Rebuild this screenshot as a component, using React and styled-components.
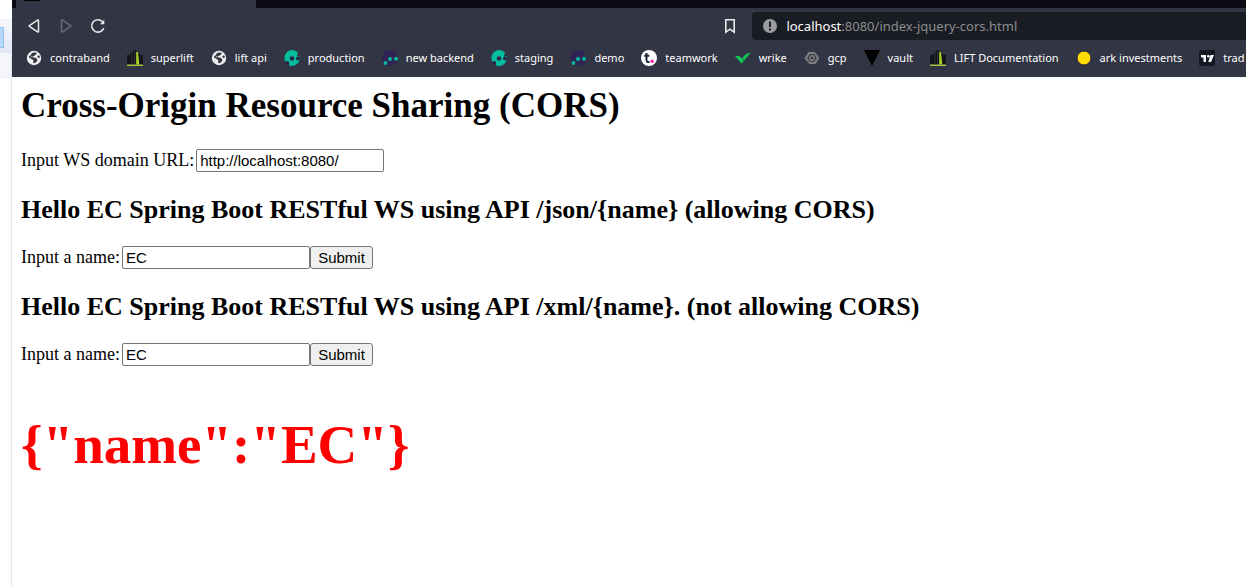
import React, { useState } from "react";
import styled, { createGlobalStyle } from "styled-components";

const GlobalStyle = createGlobalStyle`
  *, *::before, *::after { box-sizing: border-box; }
  body { margin: 0; background: #fff; overflow: hidden; }
`;

const Desktop = styled.div`
  display: grid;
  grid-template-columns: 12px minmax(0, 1fr);
  min-height: 100vh;
`;

const Behind = styled.aside`
  display: flex;
  flex-direction: column;
`;

const BehindTop = styled.div`
  height: 19px;
  background: #fff;
`;

const BehindToolbar = styled.div`
  height: 34px;
  padding-top: 7px;
  border-top: 1px solid #f0f0f0;
  background: linear-gradient(#f8f9fd, #e0e4f3);
`;

const BehindTile = styled.div`
  width: 4px;
  height: 21px;
  border: 1px solid #90c0f0;
  border-left: 0;
  background: #b8d8f8;
`;

const BehindTab = styled.div`
  height: 26px;
  border-right: 1px solid #e0e3ef;
  border-top-right-radius: 4px;
  background: #f5f6fb;
`;

const BehindPage = styled.div`
  flex: 1;
  border-right: 1px solid #e2e4ee;
`;

const Window = styled.div`
  display: flex;
  flex-direction: column;
  min-width: 0;
`;

const Chrome = styled.header`
  height: 77px;
  background: #323544;
  font-family: "Noto Sans", "Open Sans", sans-serif;
  overflow: hidden;
`;

const TabStrip = styled.div`
  height: 8px;
  padding-left: 4px;
  background: #0a0b14;
`;

const ActiveTab = styled.div`
  width: 240px;
  height: 8px;
  padding-left: 8px;
  background: #323544;
`;

const TabIcon = styled.div`
  width: 16px;
  height: 1px;
  background: #000;
`;

const Toolbar = styled.div`
  display: grid;
  grid-template-columns: 3fr 2fr;
  padding-top: 4px;
`;

const ToolbarActions = styled.div`
  display: flex;
  align-items: center;
  gap: 16px;
  padding: 0 14px;
`;

const IconButton = styled.button`
  display: flex;
  width: 16px;
  height: 16px;
  padding: 0;
  border: 0;
  background: none;
  color: ${(p) => (p.$dim ? "#696b76" : "#e8e8ea")};
  margin-left: ${(p) => (p.$end ? "auto" : "0")};
`;

const AddressBar = styled.div`
  display: flex;
  align-items: center;
  gap: 8px;
  height: 28px;
  padding-left: 10px;
  border-radius: 4px 0 0 4px;
  background: #191c22;
`;

const Address = styled.div`
  color: #8b8c90;
  font-size: 13px;
  line-height: 20px;
  white-space: nowrap;
  outline: none;
`;

const Host = styled.span`
  color: #fff;
`;

const Bookmarks = styled.nav`
  display: flex;
  gap: 17px;
  padding: 10px 0 0 14px;
`;

const Bookmark = styled.a`
  display: flex;
  flex: none;
  align-items: center;
  gap: 8px;
  color: #fff;
  font-size: 11px;
  line-height: 16px;
  text-decoration: none;
  white-space: nowrap;
`;

const Page = styled.main`
  padding: 9px;
  color: #000;
  font-family: "Liberation Serif", "Times New Roman", serif;
`;

const Title = styled.h1`
  margin: 0 0 23px;
  font-size: 35px;
  line-height: 40px;
`;

const Heading = styled.h2`
  margin: 24px 0 21px;
  font-size: 26px;
  line-height: 30px;
`;

const Row = styled.form`
  display: flex;
  align-items: center;
  height: 22px;
  font-size: 18px;
  line-height: 20px;
`;

const Label = styled.label`
  margin-right: 2px;
`;

const TextBox = styled.input`
  width: 188px;
  height: 23px;
  padding: 1px 3px;
  border: 1px solid #767676;
  border-radius: 2px;
  background: #fff;
  color: #000;
  font-family: "Liberation Sans", Arial, sans-serif;
  font-size: 15px;
  outline: none;
`;

const SubmitButton = styled.button`
  width: 63px;
  height: 23px;
  padding: 0;
  border: 1px solid #767676;
  border-radius: 3px;
  background: #efefef;
  color: #000;
  font-family: "Liberation Sans", Arial, sans-serif;
  font-size: 15px;
`;

const Result = styled.output`
  display: block;
  margin-top: 48px;
  color: #f00;
  font-size: 55px;
  font-weight: bold;
  line-height: 64px;
`;

const Icon = ({ children }) => (
  <svg width="16" height="16" viewBox="0 0 16 16" fill="none" aria-hidden="true">
    {children}
  </svg>
);

const GlobeIcon = () => (
  <Icon>
    <circle cx="8" cy="8" r="7.2" fill="#eeeeef" />
    <path
      d="M7.500 2.500 11 2.700 9.500 5 7 6.300l.5 1.200 2.700.5L11.500 10l-1.300 2.300L8 13.300l-1-1 .5-2L5.500 9 3 7.500l.3-1.800L5 5.200l.5-1.700z"
      fill="#323544"
    />
    <path d="M4.500 6.300 7 6.800l-1 1z" fill="#eeeeef" />
    <path d="m11.300 6 2-.7.7 2.200-2 .5z" fill="#323544" />
  </Icon>
);

const LiftIcon = () => (
  <Icon>
    <path d="M0 5h3V3h2V1.500L8 0l3 1.500V4h2v1h3v9H0z" fill="#15161b" />
    <path d="M5 2v12M7.500 1v13" stroke="#303338" />
    <path d="M9.200 1.500 11 2.500l1.300 12H9.200z" fill="#a6d32c" />
    <path d="M0 14.600h16v1.400H0z" fill="#a6c93c" />
  </Icon>
);

const HubIcon = () => (
  <Icon>
    <path
      d="M8 0c3 0 5 1.400 6.200 3.200-1.700.8-1.600 3 .4 3.300l1.200.1C16.500 12 12.500 16 8 16c-1.300 0-2.500-.3-3.300-.8.600-2.500-1.200-3.600-3-2.400C-1.500 7 2 0 8 0z"
      fill="#04bd9d"
    />
    <circle cx="8" cy="8.500" r="2.200" fill="#30214d" />
    <circle cx="14" cy="8.500" r="2" fill="#30214d" />
    <circle cx="3.200" cy="13" r="2" fill="#30214d" />
  </Icon>
);

const NodesIcon = () => (
  <Icon>
    <circle cx="8" cy="8" r="8" fill="#302355" />
    <circle cx="3.500" cy="13" r="1.900" fill="#08b99b" />
    <circle cx="8" cy="9" r="2" fill="#08b99b" />
    <circle cx="14" cy="8.700" r="2" fill="#08b99b" />
  </Icon>
);

const TeamworkIcon = () => (
  <Icon>
    <circle cx="8" cy="8" r="8" fill="#fff" />
    <path d="M5.500 3v7c0 1.800 1 2.300 3 1.900M3.300 5.800h5" stroke="#20243a" strokeWidth="2" />
    <circle cx="11.200" cy="11.300" r="1.800" fill="#ff22b1" />
  </Icon>
);

const WrikeIcon = () => (
  <Icon>
    <path d="M0 6h4l3 2.500L11 4l5-1.500L6.500 13.500z" fill="#10c957" />
    <path d="m7 8.500 1.500 2" stroke="#323544" strokeWidth="0.6" />
  </Icon>
);

const GcpIcon = () => (
  <Icon>
    <path d="M5 3.100h6L14 8l-3 4.900H5L2 8z" stroke="#7e7e80" strokeWidth="2.200" />
    <circle cx="8" cy="8" r="2.200" stroke="#77787b" strokeWidth="1.800" />
    <path d="m11 2 2 3M5 14l-2-3" stroke="#323544" strokeWidth="0.8" />
  </Icon>
);

const VaultIcon = () => (
  <Icon>
    <path d="M0 0h16L8 16z" fill="#000" />
    <path d="M6.500 4v4M9.500 4v4" stroke="#24252c" strokeDasharray="1 1" />
  </Icon>
);

const ArkIcon = () => (
  <Icon>
    <circle cx="8" cy="8" r="7" fill="#ffdc00" stroke="#252047" />
  </Icon>
);

const TradingIcon = () => (
  <Icon>
    <rect width="16" height="16" rx="2" fill="#131722" />
    <path d="M2 5h5v7H4.500V7.500H2zM11.500 5H15l-3 7H9.300z" fill="#fff" />
    <circle cx="9.300" cy="6.300" r="1.300" fill="#fff" />
  </Icon>
);

const bookmarks = [
  ["contraband", GlobeIcon],
  ["superlift", LiftIcon],
  ["lift api", GlobeIcon],
  ["production", HubIcon],
  ["new backend", NodesIcon],
  ["staging", HubIcon],
  ["demo", NodesIcon],
  ["teamwork", TeamworkIcon],
  ["wrike", WrikeIcon],
  ["gcp", GcpIcon],
  ["vault", VaultIcon],
  ["LIFT Documentation", LiftIcon],
  ["ark investments", ArkIcon],
  ["trad", TradingIcon],
];

function BrowserChrome() {
  return (
    <Chrome>
      <TabStrip>
        <ActiveTab>
          <TabIcon />
        </ActiveTab>
      </TabStrip>
      <Toolbar>
        <ToolbarActions>
          <IconButton aria-label="Back">
            <Icon>
              <path d="M12.500 2.600v10.800q0 1-1 .4L3.400 8.500q-.7-.5 0-1l8.100-5.300q1-.6 1 .4z" stroke="currentColor" strokeWidth="1.500" />
            </Icon>
          </IconButton>
          <IconButton aria-label="Forward" $dim>
            <Icon>
              <path d="M3.500 2.600v10.800q0 1 1 .4l8.100-5.300q.7-.5 0-1L4.500 2.200q-1-.6-1 .4z" stroke="currentColor" strokeWidth="1.500" />
            </Icon>
          </IconButton>
          <IconButton aria-label="Reload">
            <Icon>
              <path d="M13.800 10A6.200 6.200 0 1 1 12.500 3.700" stroke="currentColor" strokeWidth="1.600" />
              <path d="M14.300 1.500v4.700H10z" fill="currentColor" />
            </Icon>
          </IconButton>
          <IconButton aria-label="Bookmark this page" $end>
            <Icon>
              <path d="M3.800 1.800h8.400v12.400L8 11.200l-4.200 3z" stroke="currentColor" strokeWidth="1.600" />
            </Icon>
          </IconButton>
        </ToolbarActions>
        <AddressBar>
          <Icon>
            <circle cx="8" cy="8" r="7" fill="#9b9ca2" />
            <path d="M8 3.500v5.500M8 10.600v2" stroke="#191c22" strokeWidth="2" />
          </Icon>
          <Address role="textbox" aria-label="Address" tabIndex={0}>
            <Host>localhost</Host>:8080/index-jquery-cors.html
          </Address>
        </AddressBar>
      </Toolbar>
      <Bookmarks aria-label="Bookmarks">
        {bookmarks.map(([name, Glyph]) => (
          <Bookmark href="#" key={name}>
            <Glyph />
            {name}
          </Bookmark>
        ))}
      </Bookmarks>
    </Chrome>
  );
}

function NameForm({ id }) {
  const [name, setName] = useState("EC");
  return (
    <Row onSubmit={(e) => e.preventDefault()}>
      <Label htmlFor={id}>Input a name:</Label>
      <TextBox id={id} value={name} onChange={(e) => setName(e.target.value)} />
      <SubmitButton type="submit">Submit</SubmitButton>
    </Row>
  );
}

export default function App() {
  const [url, setUrl] = useState("http://localhost:8080/");
  return (
    <Desktop>
      <GlobalStyle />
      <Behind aria-hidden="true">
        <BehindTop />
        <BehindToolbar>
          <BehindTile />
        </BehindToolbar>
        <BehindTab />
        <BehindPage />
      </Behind>
      <Window>
        <BrowserChrome />
        <Page>
          <Title>Cross-Origin Resource Sharing (CORS)</Title>
          <Row onSubmit={(e) => e.preventDefault()}>
            <Label htmlFor="domain">Input WS domain URL:</Label>
            <TextBox id="domain" value={url} onChange={(e) => setUrl(e.target.value)} />
          </Row>
          <Heading>Hello EC Spring Boot RESTful WS using API /json/&#123;name&#125; (allowing CORS)</Heading>
          <NameForm id="json-name" />
          <Heading>Hello EC Spring Boot RESTful WS using API /xml/&#123;name&#125;. (not allowing CORS)</Heading>
          <NameForm id="xml-name" />
          <Result>&#123;"name":"EC"&#125;</Result>
        </Page>
      </Window>
    </Desktop>
  );
}
